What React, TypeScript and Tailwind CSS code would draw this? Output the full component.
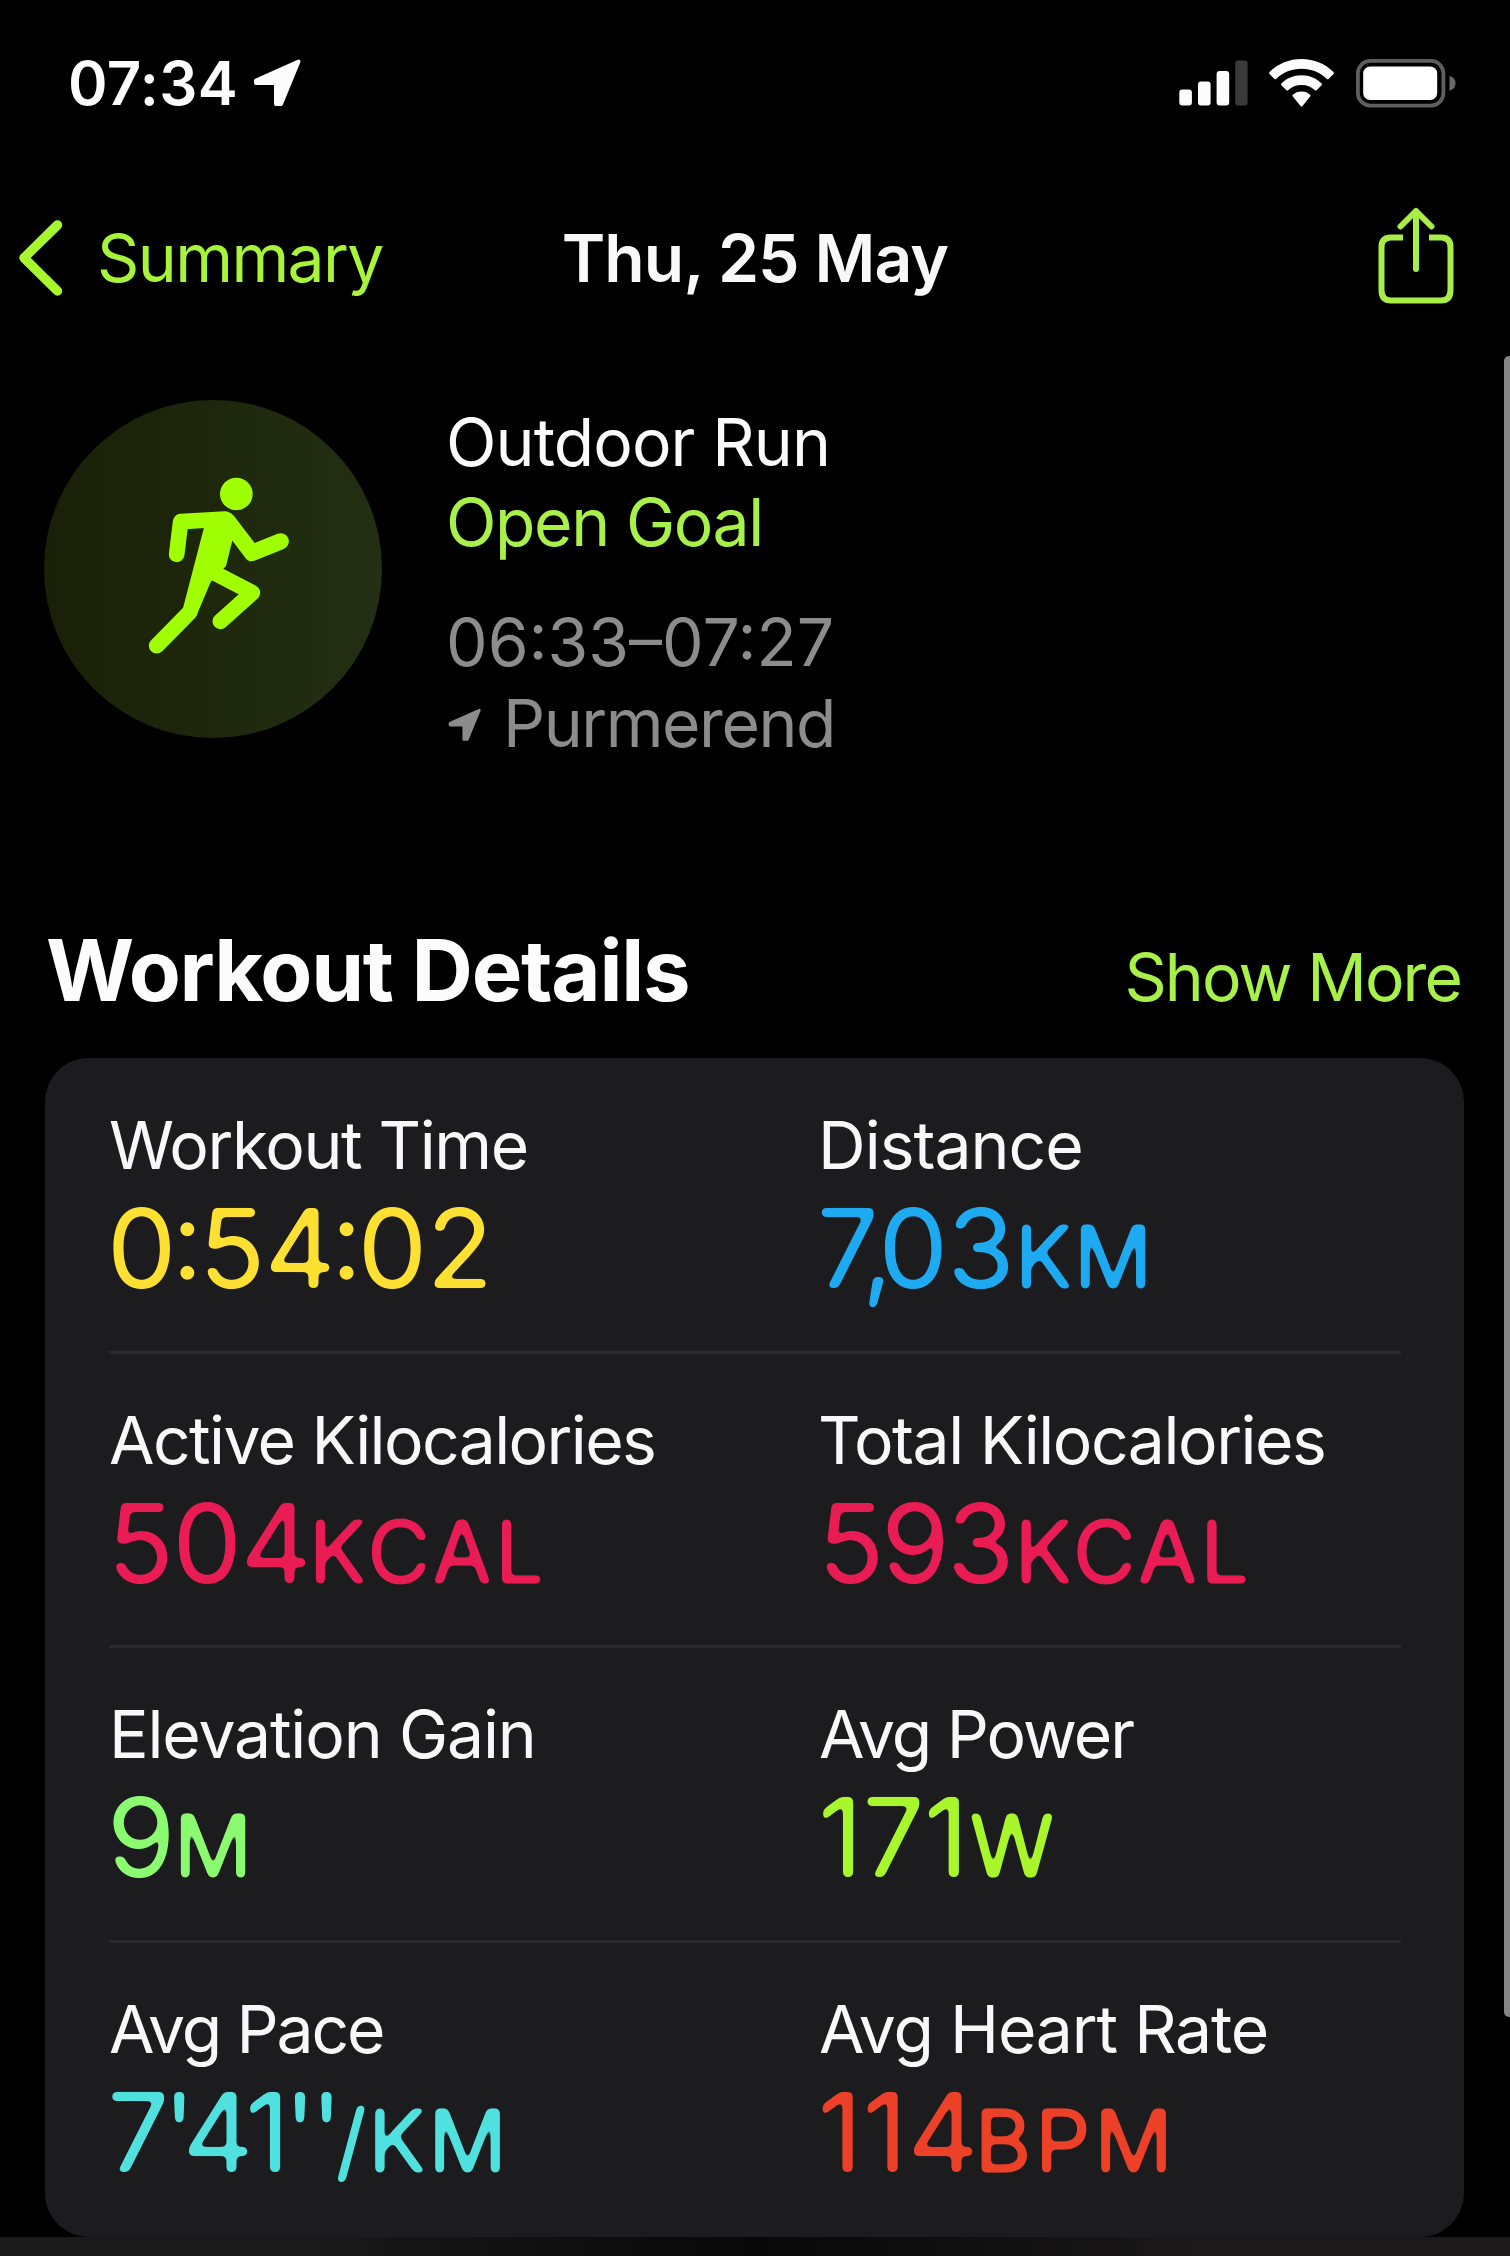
import React from "react";

type Metric = {
  label: string;
  labelClass: string;
  value: React.ReactNode;
  valueClass: string;
  unit?: string;
  unitClass?: string;
  color: string;
};

const metrics: Metric[] = [
  {
    label: "Workout Time",
    labelClass: "-ml-[1px] tracking-[-1.4px]",
    value: (
      <>
        <span className="tracking-[-4.8px]">0<Colon /></span>5<span className="tracking-[-4.8px]">4<Colon /></span>02
      </>
    ),
    valueClass: "-ml-[3px] tracking-[-0.8px]",
    color: "text-[#fde032]",
  },
  {
    label: "Distance",
    labelClass: "-ml-[2px] tracking-[-0.98px]",
    value: (
      <>
        <span className="tracking-[-17px]">7</span>
        <span className="tracking-[-15px]">,</span>03
      </>
    ),
    valueClass: "-ml-[3.5px] tracking-[-1px]",
    unit: "KM",
    unitClass: "ml-[1px] tracking-[0.5px]",
    color: "text-[#1eaaf1]",
  },
  {
    label: "Active Kilocalories",
    labelClass: "-ml-[1px] tracking-[-1.6px]",
    value: "504",
    valueClass: "-ml-[3px] tracking-[-1.4px]",
    unit: "KCAL",
    unitClass: "-ml-[1.5px] tracking-[3px]",
    color: "text-[#e91c54]",
  },
  {
    label: "Total Kilocalories",
    labelClass: "-ml-[2px] tracking-[-1.45px]",
    value: "593",
    valueClass: "-ml-[2.5px] tracking-[-3px]",
    unit: "KCAL",
    unitClass: "ml-[3px] tracking-[2.8px]",
    color: "text-[#e91c54]",
  },
  {
    label: "Elevation Gain",
    labelClass: "-ml-[1px] tracking-[-1.15px]",
    value: "9",
    valueClass: "-ml-[3px]",
    unit: "M",
    unitClass: "-ml-[1.5px]",
    color: "text-[#8bfa70]",
  },
  {
    label: "Avg Power",
    labelClass: "-ml-[1px] tracking-[-2.03px]",
    value: "171",
    valueClass: "-ml-[2px] tracking-[-0.6px]",
    unit: "W",
    unitClass: "ml-[1px]",
    color: "text-[#a8f62c]",
  },
  {
    label: "Avg Pace",
    labelClass: "-ml-[1px] tracking-[-2.1px]",
    value: "7'41''",
    valueClass: "-ml-[3px] tracking-[-6.4px]",
    unit: "/KM",
    unitClass: "-ml-[1px] tracking-[1.4px]",
    color: "text-[#50e1df]",
  },
  {
    label: "Avg Heart Rate",
    labelClass: "-ml-[1px] tracking-[-1.2px]",
    value: "114",
    valueClass: "-ml-[2.5px] tracking-[0.3px]",
    unit: "BPM",
    unitClass: "-ml-[4.5px] tracking-[3.6px]",
    color: "text-[#ec4128]",
  },
];

function Colon() {
  return <span className="inline-block -translate-y-[9px]">:</span>;
}

function LocationArrow({ className }: { className: string }) {
  return (
    <svg viewBox="0 0 48 48" className={className} fill="currentColor" stroke="currentColor" strokeWidth="4" strokeLinejoin="round">
      <path d="M45.5 2.5 L3 21.5 L3 24 H23 V45 H28 Z" />
    </svg>
  );
}

function StatusIcons() {
  return (
    <div className="flex items-center">
      <svg width="69" height="46" viewBox="0 0 69 46" fill="#fcfcfc">
        <rect x="0.3" y="29.5" width="12.6" height="16" rx="3" />
        <rect x="19" y="21.5" width="12.6" height="24" rx="3" />
        <rect x="37.6" y="11" width="12.6" height="34.5" rx="3" />
        <rect x="56.2" y="0.5" width="12.4" height="45" rx="3" fill="#3a3a3a" />
      </svg>
      <svg width="65" height="48" viewBox="0 0 65 48" className="ml-[21px]" fill="#fcfcfc">
        <path d="M32.5 0 C45 0 56.500 4.900 64.500 13.100 Q65.300 14 64.500 14.900 L59.600 19.900 Q58.700 20.700 57.800 19.900 C51 13.300 42.200 9.700 32.500 9.700 C22.800 9.700 14 13.300 7.200 19.900 Q6.300 20.700 5.400 19.900 L0.500 14.900 Q-0.300 14 0.500 13.100 C8.500 4.900 20 0 32.500 0 Z" />
        <path d="M32.500 16.300 C40.500 16.300 47.500 19.400 52.600 24.500 Q53.500 25.400 52.600 26.300 L47.600 31.300 Q46.800 32.100 45.900 31.300 C42.300 28 37.700 26.100 32.500 26.100 C27.300 26.100 22.700 28 19.100 31.300 Q18.200 32.100 17.400 31.300 L12.400 26.300 Q11.500 25.400 12.400 24.500 C17.500 19.400 24.500 16.300 32.500 16.300 Z" />
        <path d="M32.500 32.500 C36 32.500 39 33.700 41.200 35.800 Q42 36.700 41.200 37.600 L33.500 47 Q32.500 48 31.500 47 L23.800 37.600 Q23 36.700 23.800 35.800 C26 33.700 29 32.500 32.500 32.500 Z" />
      </svg>
      <svg width="100" height="49" viewBox="0 0 100 49" className="ml-[22px]">
        <rect x="1.900" y="1.900" width="85.500" height="44.700" rx="12.500" fill="none" stroke="#5e5e5e" strokeWidth="3.800" />
        <rect x="7.200" y="7.500" width="74" height="33.500" rx="7" fill="#ffffff" />
        <path d="M93.500 16.800 C97.500 18 99.500 20.500 99.500 24.300 C99.500 28 97.500 30.600 93.500 31.800 Z" fill="#6a6a6a" />
      </svg>
    </div>
  );
}

function RunnerBadge() {
  return (
    <div className="h-[338px] w-[338px] shrink-0 rounded-full bg-linear-to-r from-[#192007] to-[#232f12]">
      <svg viewBox="46 60 1014 1014" className="h-full w-full" fill="none" stroke="#a1ff04" strokeWidth="47" strokeLinecap="round" strokeLinejoin="round">
        <circle cx="623" cy="342" r="49" fill="#a1ff04" stroke="none" />
        <path d="M444 523 L456 425 L590 417" />
        <path d="M596 422 L670 519 L756 484" strokeWidth="49" />
        <path d="M560 580 L671 638 L575 724" />
        <path d="M483 697 L384 797" />
        <path d="M525 446 L545 402 L590 396 L614 420 L612 478 L592 558 L546 606 L504 706 L480 716 L461 692 Z" fill="#a1ff04" stroke="none" />
      </svg>
    </div>
  );
}

function MetricCell({ m }: { m: Metric }) {
  return (
    <div className="flex flex-col">
      <div className={`h-[80px] text-[66px] leading-[80px] text-[#f8f8f8] ${m.labelClass}`}>{m.label}</div>
      <div className={`mt-[8px] flex h-[110px] items-baseline leading-[110px] filter-[url(#soften-corners)] ${m.color}`}>
        <span className={`text-[110px] ${m.valueClass}`}>{m.value}</span>
        {m.unit && <span className={`text-[87px] [-webkit-text-stroke:1px_currentColor] ${m.unitClass}`}>{m.unit}</span>}
      </div>
    </div>
  );
}

export default function App() {
  const rows = [0, 2, 4, 6].map((i) => metrics.slice(i, i + 2));
  return (
    <div className="relative flex h-[2256px] w-[1510px] flex-col overflow-hidden bg-black font-[Inter,sans-serif] whitespace-nowrap">
      {/* Rounds the glyph terminals of the metric values */}
      <svg width="0" height="0" className="absolute">
        <filter id="soften-corners" x="-5%" y="-10%" width="110%" height="130%" colorInterpolationFilters="sRGB">
          <feGaussianBlur stdDeviation="2.8" />
          <feComponentTransfer>
            <feFuncA type="linear" slope="7" intercept="-2.9" />
          </feComponentTransfer>
        </filter>
      </svg>

      <header className="mt-[43px] flex h-[80px] items-center justify-between pr-[54px] pl-[68px]">
        <div className="flex items-center text-[#fcfcfc]">
          <span className="text-[60px] leading-[80px] font-semibold tracking-[0.4px]">07:34</span>
          <LocationArrow className="ml-[15px] h-[48px] w-[48px]" />
        </div>
        <StatusIcons />
      </header>

      <nav className="mt-[95px] grid h-[80px] grid-cols-3 grid-rows-[80px] items-center text-[66px] leading-[80px]">
        <div className="flex items-center pl-[18px] text-[#a8f43a]">
          <svg width="46" height="78" viewBox="0 0 46 78" fill="none" stroke="#a6f72e" strokeWidth="9.500" strokeLinecap="round" strokeLinejoin="round">
            <path d="M39.500 6 L6 38.800 L39.500 72" />
          </svg>
          <span className="ml-[33px] tracking-[-1.6px]">Summary</span>
        </div>
        <div className="text-center font-semibold tracking-[-0.9px] text-[#f8f8f8]">Thu, 25 May</div>
        <div className="flex justify-end pr-[56px]">
          <svg width="76" height="98" viewBox="0 0 76 98" className="-mt-[4px]" fill="none" stroke="#a9ee48" strokeWidth="6" strokeLinecap="round" strokeLinejoin="round">
            <path d="M25 30.500 H13 Q3.500 30.500 3.500 40 V83 Q3.500 93.500 13 93.500 H63 Q72.500 93.500 72.500 83 V40 Q72.500 30.500 63 30.500 H51" strokeLinecap="butt" />
            <path d="M38 4 V62 M22.500 19.500 L38 4 L53.500 19.500" />
          </svg>
        </div>
      </nav>

      <section className="mt-[102px] flex pl-[44px]">
        <RunnerBadge />
        <div className="mt-[2px] ml-[64px] flex flex-col text-[66px] leading-[80px]">
          <div className="tracking-[-0.9px] text-[#fafafa]">Outdoor Run</div>
          <div className="tracking-[-1.4px] text-[#a8f04a]">Open Goal</div>
          <div className="mt-[40px] tracking-[0px] text-[#8c8c8c]">06:33–07:27</div>
          <div className="mt-[1px] flex items-center text-[#8c8c8c]">
            <LocationArrow className="mt-[4px] ml-[2px] h-[34px] w-[33px]" />
            <span className="ml-[22px] tracking-[-1.45px]">Purmerend</span>
          </div>
        </div>
      </section>

      <div className="absolute top-[356px] right-0 h-[1661px] w-[6px] rounded-l-[5px] bg-[#868686]" />

      <section className="mt-[158px] flex flex-col">
        <div className="flex h-[100px] items-baseline justify-between pr-[49px] pl-[46px]">
          <h1 className="text-[85px] leading-[100px] font-bold tracking-[-1.27px] text-[#fcfcfc]">Workout Details</h1>
          <a className="text-[66px] leading-[80px] tracking-[-1.91px] text-[#a8f04a]">Show More</a>
        </div>
        <div className="mt-[37px] mr-[46px] ml-[45px] flex h-[1179px] flex-col rounded-[44px] bg-[#1c1c1e] pt-px pr-[63px] pl-[64px]">
          {rows.map((row, i) => (
            <div
              key={row[0].label}
              className={`grid h-[294.6px] shrink-0 grid-cols-[710px_1fr] border-b-[3px] pt-[46px] pl-[1px] ${i < 3 ? "border-[#2a2a2c]" : "border-transparent"}`}
            >
              {row.map((m) => (
                <MetricCell key={m.label} m={m} />
              ))}
            </div>
          ))}
        </div>
      </section>

      <div className="h-[19px] shrink-0 bg-linear-to-r from-[#1a1a1a] from-20% via-[#080808] via-50% to-[#1b1919] to-80%" />
    </div>
  );
}
